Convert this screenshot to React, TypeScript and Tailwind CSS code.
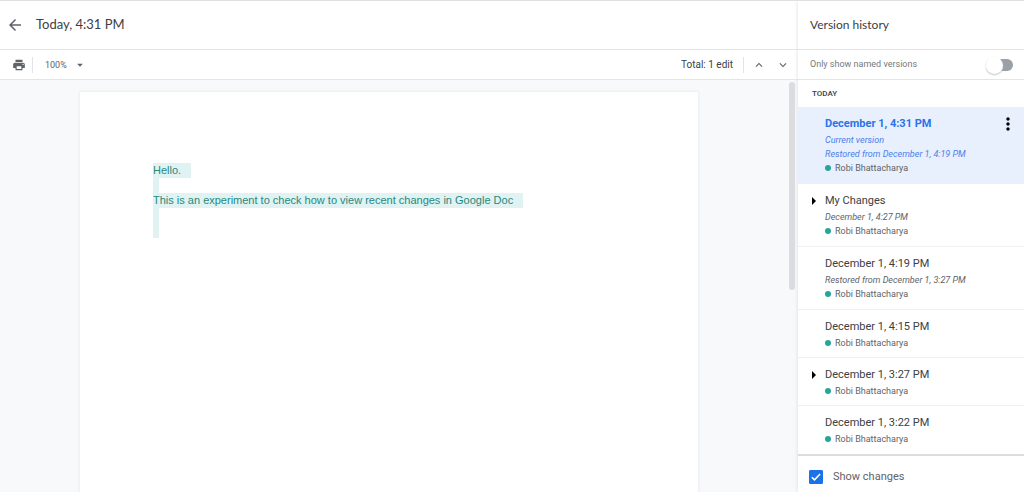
import { useState } from 'react';
import clsx from 'clsx';
import { MdArrowBack, MdPrint, MdMoreVert, MdArrowDropDown, MdExpandLess, MdExpandMore } from 'react-icons/md';

type Version = {
  id: number;
  title: string;
  notes: string[];
  author: string;
  expandable?: boolean;
};

const versions: Version[] = [
  {
    id: 1,
    title: 'December 1, 4:31 PM',
    notes: ['Current version', 'Restored from December 1, 4:19 PM'],
    author: 'Robi Bhattacharya',
  },
  { id: 2, title: 'My Changes', notes: ['December 1, 4:27 PM'], author: 'Robi Bhattacharya', expandable: true },
  { id: 3, title: 'December 1, 4:19 PM', notes: ['Restored from December 1, 3:27 PM'], author: 'Robi Bhattacharya' },
  { id: 4, title: 'December 1, 4:15 PM', notes: [], author: 'Robi Bhattacharya' },
  { id: 5, title: 'December 1, 3:27 PM', notes: [], author: 'Robi Bhattacharya', expandable: true },
  { id: 6, title: 'December 1, 3:22 PM', notes: [], author: 'Robi Bhattacharya' },
];

function VersionItem({ version, selected, onSelect }: { version: Version; selected: boolean; onSelect: () => void }) {
  return (
    <li
      className={clsx(
        'flex items-start border-b border-[#eff0f1] pt-2 pl-3.5 pr-1.5 last:border-b-0',
        version.notes.length ? 'pb-2' : 'pb-[7px]',
        selected && 'bg-[#e8effd]'
      )}
    >
      <div className="w-[13px] shrink-0">
        {version.expandable && (
          <button type="button" aria-label="Expand versions" className="flex h-[18px] items-center">
            <svg viewBox="0 0 4 8" className="h-2 w-1 fill-black">
              <path d="M0 0l4 4-4 4z" />
            </svg>
          </button>
        )}
      </div>

      <div className="min-w-0 flex-1 whitespace-nowrap">
        <button
          type="button"
          onClick={onSelect}
          className={clsx(
            'block text-[11px] leading-[18px]',
            selected ? 'font-bold text-[#2b73e8]' : 'text-[#3c4043]'
          )}
        >
          {version.title}
        </button>
        {version.notes.map((note) => (
          <p
            key={note}
            className={clsx('text-[9px] leading-[14px] italic', selected ? 'text-[#4a80ec]' : 'text-[#5f6368]')}
          >
            {note}
          </p>
        ))}
        <p className="flex items-center gap-1 text-[9px] leading-[14px] text-[#5f6368]">
          <span className="size-1.5 rounded-full bg-[#26a69a]" />
          {version.author}
        </p>
      </div>

      {selected && (
        <button type="button" aria-label="More actions" className="flex h-[18px] items-center text-black">
          <MdMoreVert className="size-5" />
        </button>
      )}
    </li>
  );
}

export default function App() {
  const [selectedId, setSelectedId] = useState(1);
  const [namedOnly, setNamedOnly] = useState(false);
  const [showChanges, setShowChanges] = useState(true);

  return (
    <div className="flex h-screen overflow-hidden border-t border-[#e0e0e0] bg-white font-['Roboto',sans-serif]">
      {/* Document */}
      <main className="flex min-w-0 flex-1 flex-col">
        <header className="flex h-[49px] shrink-0 items-center gap-3 border-b border-[#e3e4e6] pl-1.5">
          <button type="button" aria-label="Back" className="text-[#5f6368]">
            <MdArrowBack className="size-4.5" />
          </button>
          <h1 className="font-['Lato',sans-serif] text-[13px] text-[#3c4043]">Today, 4:31 PM</h1>
        </header>

        <div className="flex h-[30px] shrink-0 items-center border-b border-[#e3e4e6] pr-2 pl-3 text-[#5f6368]">
          <button type="button" aria-label="Print">
            <MdPrint className="size-3.5" />
          </button>
          <div className="mx-1.5 h-4 w-px bg-[#e3e4e6]" />
          <div className="relative ml-1.5 flex items-center">
            <select aria-label="Zoom" defaultValue="100" className="w-12 appearance-none text-[9px] leading-4 outline-none">
              <option value="50">50%</option>
              <option value="100">100%</option>
              <option value="200">200%</option>
            </select>
            <MdArrowDropDown className="pointer-events-none absolute right-1.5 size-3.5" />
          </div>

          <span className="ml-auto text-[10px] text-[#3c4043]">Total: 1 edit</span>
          <div className="mr-2 ml-2.5 h-4 w-px bg-[#e3e4e6]" />
          <button type="button" aria-label="Previous edit">
            <MdExpandLess className="size-3.5" />
          </button>
          <button type="button" aria-label="Next edit" className="ml-2.5">
            <MdExpandMore className="size-3.5" />
          </button>
        </div>

        <div className="flex min-h-0 flex-1 bg-[#f8f9fa]">
          <div className="flex min-w-0 flex-1 justify-center pt-3">
            <article className="w-[618px] bg-white px-[73px] pt-[71px] font-['Liberation_Sans',sans-serif] text-[11px] leading-[15px] text-[#26897e] shadow-[0_0_2px_1px_#eceef0]">
              <p className="w-fit bg-[#e0f2f1] pr-2.5">Hello.</p>
              <div className="h-[15px] w-1.5 bg-[#e0f2f1]" />
              <p className="w-fit bg-[#e0f2f1] pr-2.5">
                This is an experiment to check how to view recent changes in Google Doc
              </p>
              <div className="h-[30px] w-1.5 bg-[#e0f2f1]" />
            </article>
          </div>
          <div className="w-5 shrink-0 pt-0.5 pl-[11px]">
            <div className="h-[208px] w-1.5 rounded-full bg-[#dadce0]" />
          </div>
        </div>
      </main>

      {/* Version history */}
      <aside className="z-10 flex w-[226px] shrink-0 flex-col bg-white shadow-[0_0_4px_#dadce0]">
        <header className="flex h-[49px] shrink-0 items-center border-b border-[#e3e4e6] pl-3">
          <h2 className="font-['Lato',sans-serif] text-xs text-[#3c4043]">Version history</h2>
        </header>

        <div className="flex h-[30px] shrink-0 items-center justify-between border-b border-[#e3e4e6] pr-[11px] pl-3">
          <label htmlFor="named-only" className="text-[9px] text-[#75797e]">
            Only show named versions
          </label>
          <input
            id="named-only"
            type="checkbox"
            role="switch"
            checked={namedOnly}
            onChange={(e) => setNamedOnly(e.target.checked)}
            className="relative h-3 w-6 appearance-none rounded-full bg-[#9aa0a6] before:absolute before:-top-0.5 before:-left-[3px] before:size-[17px] before:rounded-full before:bg-white before:shadow-[0_1px_2px_#bdc1c6] checked:bg-[#8ab4f8] checked:before:left-3"
          />
        </div>

        <h3 className="flex h-[27px] shrink-0 items-center pl-3.5 text-[8px] font-medium text-[#3c4043]">TODAY</h3>

        <ul className="min-h-0 flex-1 overflow-hidden">
          {versions.map((version) => (
            <VersionItem
              key={version.id}
              version={version}
              selected={version.id === selectedId}
              onSelect={() => setSelectedId(version.id)}
            />
          ))}
        </ul>

        <footer className="flex h-[38px] shrink-0 items-center border-t-2 border-[#dadce0] pt-1.5 pl-[11px]">
          <label className="flex items-center gap-2.5 text-[11px] text-[#5f6368]">
            <span className="grid place-items-center">
              <input
                type="checkbox"
                checked={showChanges}
                onChange={(e) => setShowChanges(e.target.checked)}
                className="col-start-1 row-start-1 size-3.5 appearance-none rounded-[1px] border border-[#5f6368] checked:border-[#1a73e8] checked:bg-[#1a73e8]"
              />
              {showChanges && (
                <svg viewBox="0 0 14 14" className="pointer-events-none col-start-1 row-start-1 size-3.5">
                  <path d="M2.8 7.2l2.7 2.7 5.6-5.9" fill="none" stroke="white" strokeWidth="1.6" />
                </svg>
              )}
            </span>
            Show changes
          </label>
        </footer>
      </aside>
    </div>
  );
}
